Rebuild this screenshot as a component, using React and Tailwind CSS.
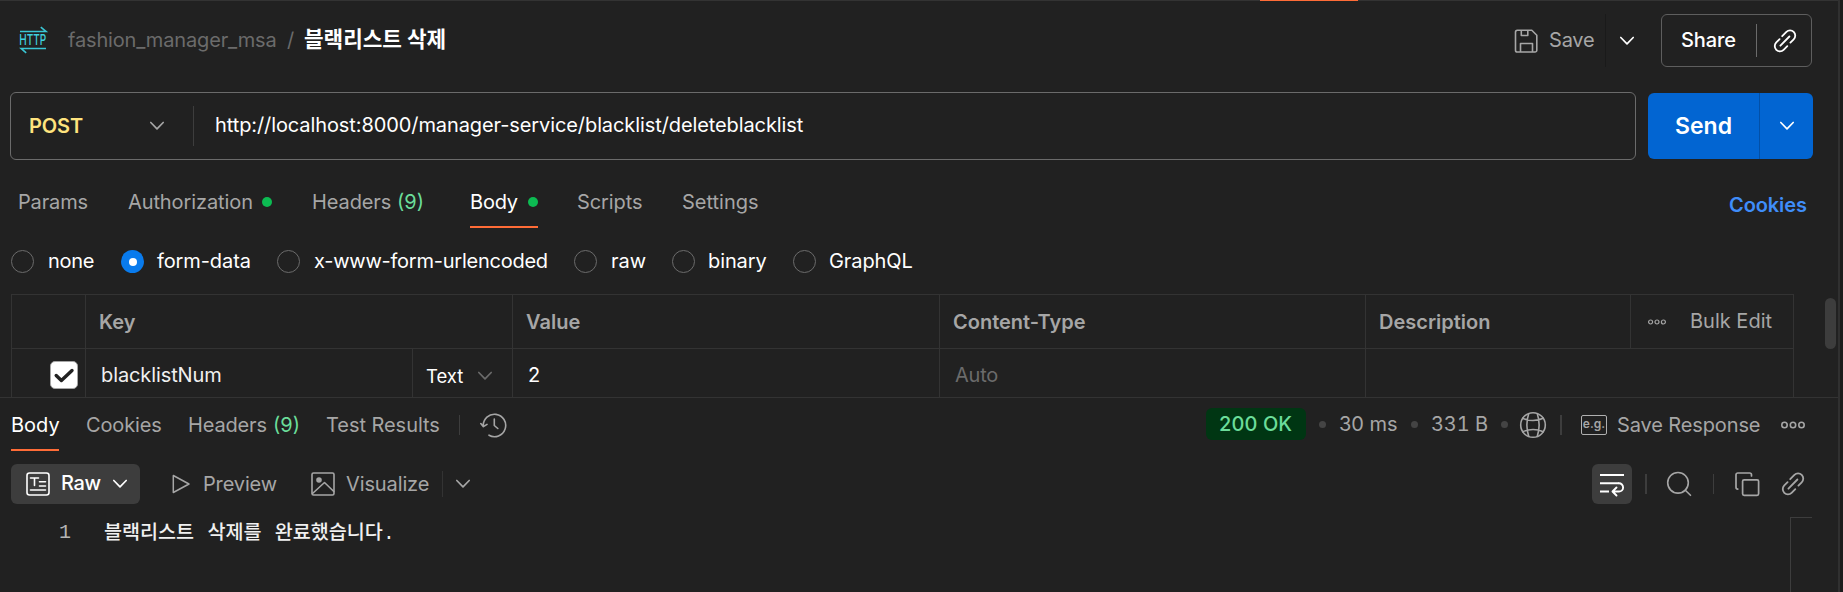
import React from "react";

function Icon({ w = 24, h = w, vb = `0 0 ${w} ${h}`, sw = 1.5, className = "", children }) {
  return (
    <svg
      width={w}
      height={h}
      viewBox={vb}
      fill="none"
      stroke="currentColor"
      strokeWidth={sw}
      strokeLinecap="round"
      strokeLinejoin="round"
      className={`block shrink-0 ${className}`}
    >
      {children}
    </svg>
  );
}

const Chevron = ({ className }) => (
  <Icon w={16} h={10} sw={1.7} className={className}>
    <path d="M1.8 1.5 8 7.8l6.2-6.3" />
  </Icon>
);

const LinkIcon = ({ className }) => (
  <Icon w={26} sw={1.8} className={className}>
    <path d="M10.200 8.200l4.200-4.300a5.100 5.100 0 0 1 7.300 0 5.200 5.200 0 0 1 0 7.400l-3.300 3.300M15.300 18.100l-3.700 3.700a5.100 5.100 0 0 1-7.300 0 5.200 5.200 0 0 1 0-7.400l3.300-3.300M8.400 17.700l9-9.200" />
  </Icon>
);

const More = ({ w, r, sw, className }) => (
  <Icon w={w} h={8} vb={`0 0 ${w} 8`} sw={sw} className={className}>
    <circle cx={r + sw / 2} cy="4" r={r} />
    <circle cx={w / 2} cy="4" r={r} />
    <circle cx={w - r - sw / 2} cy="4" r={r} />
  </Icon>
);

const HttpIcon = () => (
  <svg width="28" height="28" viewBox="0 0 28 28" className="block shrink-0 overflow-visible" fill="none" stroke="#3ac6d4" strokeWidth="1.6">
    <path d="M1 5.500h26L21.800 1.200M27 22.500H2.200L7.200 26.800" />
    <text x="0.300" y="19.300" textLength="27" lengthAdjust="spacingAndGlyphs" fill="#3fd0de" stroke="none" className="font-['Inter'] text-[15px] font-medium">
      HTTP
    </text>
  </svg>
);

const Dot = ({ className }) => <i className={`block size-[10px] shrink-0 rounded-full bg-[#0cbb52] ${className}`} />;

const Radio = ({ on }) =>
  on ? (
    <i className="flex size-[23px] shrink-0 items-center justify-center rounded-full bg-[#097bed]">
      <i className="block size-2 rounded-full bg-white" />
    </i>
  ) : (
    <i className="block size-[23px] shrink-0 rounded-full border border-[#6b6b6b]" />
  );

function Header() {
  return (
    <header className="flex h-[91px] shrink-0 pl-[19px] pt-[13px]">
      <div className="flex h-[52px] w-[1494px] items-center">
        <div className="w-[49px]"><HttpIcon /></div>
        <span className="w-[219px] tracking-[-0.16px] text-[#6b6b6b]">fashion_manager_msa</span>
        <span className="w-[17px] text-[#6b6b6b]">/</span>
        <h1 className="pb-[2px] font-['Inter','Noto_Sans_CJK_KR',sans-serif] text-[21.300px] font-bold leading-6 text-white">블랙리스트 삭제</h1>
      </div>
      <div className="flex h-[53px] w-[148px] items-center text-[#a6a6a6]">
        <Icon w={26} sw={1.6} className="mr-[10px]">
          <path d="M4.300 2.300h14.500l5 5v14.900a1.800 1.800 0 0 1-1.800 1.800H4.300a1.800 1.800 0 0 1-1.800-1.800V4.100a1.800 1.800 0 0 1 1.800-1.800ZM8.300 2.500v5h6.500v-5M7.500 24v-8.500h12V24" />
        </Icon>
        <span className="w-[56px] pb-[2px] tracking-[-0.2px]">Save</span>
        <i className="h-full w-px bg-[#1a1a1a]" />
        <Chevron className="ml-[13px] text-white" />
      </div>
      <div className="flex h-[53px] w-[151px] items-center rounded-md border border-[#5e5e5e] font-medium text-white">
        <span className="w-[75px] pb-[2px] pl-[19px] tracking-[-0.1px]">Share</span>
        <i className="ml-[19px] h-[33px] w-px bg-[#6b6b6b]" />
        <LinkIcon className="ml-[15px]" />
      </div>
    </header>
  );
}

function UrlBar() {
  return (
    <div className="flex h-[68px] shrink-0 items-center pl-[10px]">
      <div className="flex h-[68px] w-[1626px] items-center rounded-md border border-[#6b6b6b]">
        <span className="w-[138px] pl-[18px] font-semibold tracking-[-0.1px] text-[#ffe47e]">POST</span>
        <Chevron className="text-[#a6a6a6]" />
        <i className="ml-[28px] h-[40px] w-px bg-[#3d3d3d]" />
        <span className="ml-[21px] pb-[2px] tracking-[-0.095px] text-white">http://localhost:8000/manager-service/blacklist/deleteblacklist</span>
      </div>
      <button className="ml-[12px] flex h-[66px] w-[165px] items-center rounded-md bg-[#0265d2] text-left text-white">
        <span className="w-[111px] pl-[27px] text-[23px] font-semibold">Send</span>
        <i className="h-full w-px bg-[#0250a8]" />
        <Chevron className="ml-[19px]" />
      </button>
    </div>
  );
}

function RequestTabs() {
  return (
    <nav className="flex h-[69px] shrink-0 pl-[18px] text-[#a6a6a6]">
      <div className="flex h-[68px] items-end">
        <span className="h-[41px] w-[110px] tracking-[-0.15px]">Params</span>
        <span className="flex h-[41px] w-[184px]">
          <span className="w-[134px] tracking-[-0.1px]">Authorization</span>
          <Dot className="mt-[10px]" />
        </span>
        <span className="flex h-[41px] w-[158px]">
          <span className="w-[85px] tracking-[-0.1px]">Headers</span>
          <span className="text-[#6bdd9a]">(9)</span>
        </span>
        <span className="mr-[39px] flex h-[41px] w-[68px] border-b-2 border-[#ff6c37] text-white">
          <span className="w-[58px] tracking-[-0.2px]">Body</span>
          <Dot className="mt-[10px]" />
        </span>
        <span className="h-[41px] w-[105px] tracking-[-0.1px]">Scripts</span>
        <span className="h-[41px] w-[1047px]">Settings</span>
        <a className="h-[38px] font-semibold tracking-[-0.1px] text-[#3f8df9]">Cookies</a>
      </div>
    </nav>
  );
}

function RadioOption({ className, on, children }) {
  return (
    <label className={`flex h-[23px] items-center ${className}`}>
      <Radio on={on} />
      <span className="pb-[2px]">{children}</span>
    </label>
  );
}

function BodyTypes() {
  return (
    <div className="flex h-[65px] shrink-0 pl-[11px] pt-[21px] text-white">
      <RadioOption className="w-[110px] gap-[14px] tracking-[-0.3px]">none</RadioOption>
      <RadioOption on className="w-[156px] gap-[13px] tracking-[-0.1px]">form-data</RadioOption>
      <RadioOption className="w-[297px] gap-[14px] tracking-[-0.24px]">x-www-form-urlencoded</RadioOption>
      <RadioOption className="w-[98px] gap-[14px]">raw</RadioOption>
      <RadioOption className="w-[121px] gap-[13px] tracking-[-0.1px]">binary</RadioOption>
      <RadioOption className="gap-[13px] tracking-[-0.1px]">GraphQL</RadioOption>
    </div>
  );
}

function ParamsTable() {
  return (
    <div className="flex h-[104px] shrink-0 border-b border-[#333333] pl-[11px]">
      <div className="w-[1783px] border-x border-t border-[#333333]">
        <div className="flex h-[54px] items-center border-b border-[#333333] font-semibold text-[#a6a6a6]">
          <span className="h-full w-[74px] border-r border-[#333333]" />
          <span className="flex h-full w-[427px] items-center border-r border-[#333333] pl-[13px]">Key</span>
          <span className="flex h-full w-[427px] items-center border-r border-[#333333] pl-[13px]">Value</span>
          <span className="flex h-full w-[426px] items-center border-r border-[#333333] pl-[13px]">Content-Type</span>
          <span className="flex h-full w-[265px] items-center border-r border-[#333333] pl-[13px]">Description</span>
          <More w={18} r={2} sw={1.2} className="ml-[17px]" />
          <span className="ml-[24px] pb-[2px] font-normal">Bulk Edit</span>
        </div>
        <div className="flex h-[48px] text-[#f0f0f0]">
          <span className="h-full w-[74px] border-r border-[#333333] pl-[38px] pt-[12px]">
            <i className="flex size-[28px] items-center justify-center rounded-[5px] border border-[#a6a6a6] bg-white text-[#212121]">
              <Icon w={22} sw={3.4}>
                <path d="M3.200 11.500l5.200 5L19 6.500" />
              </Icon>
            </i>
          </span>
          <span className="flex h-full w-[327px] items-center border-r border-[#333333] pl-[15px] pb-px pt-[5px] tracking-[-0.1px]">blacklistNum</span>
          <span className="flex h-full w-[100px] items-center border-r border-[#333333] pl-[13px] pt-[5px] text-[18.500px]">
            <span className="w-[51px] text-white">Text</span>
            <Chevron className="text-[#6b6b6b]" />
          </span>
          <span className="flex h-full w-[427px] items-center border-r border-[#333333] pl-[15px] pt-[4px] text-white">2</span>
          <span className="flex h-full w-[426px] items-center border-r border-[#333333] pl-[15px] pt-[4px] tracking-[-0.2px] text-[#6b6b6b]">Auto</span>
        </div>
      </div>
      <i className="ml-[31px] mt-[4px] h-[51px] w-[11px] rounded-full bg-[#3d3d3d]" />
    </div>
  );
}

const Sep = ({ className }) => <i className={`block h-[20px] shrink-0 bg-[#3d3d3d] ${className}`} />;
const GreyDot = ({ className }) => <i className={`block size-[7px] shrink-0 rounded-full bg-[#444444] ${className}`} />;

function ResponseTabs() {
  return (
    <div className="flex h-[66px] shrink-0 pl-[11px] text-[#a6a6a6]">
      <span className="mt-[12px] h-[41px] w-[48px] border-b-2 border-[#ff6c37] text-white">Body</span>
      <div className="flex h-[54px] w-[1147px] items-center pl-[27px]">
        <span className="w-[102px] tracking-[-0.15px]">Cookies</span>
        <span className="w-[85px] tracking-[-0.15px]">Headers</span>
        <span className="w-[53px] text-[#6bdd9a]">(9)</span>
        <span className="w-[133px] tracking-[-0.05px]">Test Results</span>
        <Sep className="w-px" />
        <Icon w={27} h={26} sw={1.6} className="ml-[20px]">
          <path d="M3.300 14A11.200 11.200 0 1 1 9 23.200M.8 11.500l2.600 3.200 3.600-2.300M14.300 7v6.500l3.500 3" />
        </Icon>
      </div>
      <div className="flex h-[52px] items-center">
        <span className="flex h-[32px] w-[100px] items-center rounded-md bg-[#003613] pl-[13px] font-medium tracking-[0.1px] text-[#6bdd9a]">200 OK</span>
        <GreyDot className="ml-[13px]" />
        <span className="ml-[13px] w-[72px]">30 ms</span>
        <GreyDot className="mr-[13px]" />
        <span className="w-[70px] tracking-[-0.1px] tabular-nums">331 B</span>
        <GreyDot className="mr-[11px]" />
        <Icon w={28} sw={1.6} className="mt-[2px]">
          <circle cx="14" cy="14" r="12.300" />
          <path d="M9.700 2.800c-2.300 7-2.300 15.400 0 22.400M18.300 2.800c2.300 7 2.300 15.400 0 22.400M3.800 7.200c5.600 3 14.800 3 20.400 0M3.800 20.800c5.600-3 14.800-3 20.400 0" />
        </Icon>
        <Sep className="ml-[13px] mt-[2px] w-[2px]" />
        <span className="ml-[19px] mt-[2px] flex h-[20px] w-[26px] items-center justify-center rounded-[2px] border border-[#b0b0b0] pb-[3px] text-[12px] font-semibold leading-none">e.g.</span>
        <span className="ml-[10px] mt-[2px] w-[164px] tracking-[-0.12px]">Save Response</span>
        <More w={24} r={2.700} sw={1.600} className="mt-[2px]" />
      </div>
    </div>
  );
}

function ResponseToolbar() {
  return (
    <div className="flex h-[40px] shrink-0 items-center pl-[11px] text-[#a6a6a6]">
      <div className="flex h-[40px] w-[129px] items-center rounded-md bg-[#3d3d3d] text-white">
        <Icon w={24} sw={1.600} className="ml-[15px]">
          <rect x="1" y="1" width="22" height="22" rx="2.500" />
          <path d="M4.500 6h8M8.500 6v7.500M13.500 9.700h6M13.500 14h6M4.500 18h15" />
        </Icon>
        <span className="ml-[11px] w-[51px] pb-[2px] font-medium tracking-[-0.3px]">Raw</span>
        <Chevron />
      </div>
      <Icon w={20} h={22} className="ml-[31px]">
        <path d="M2.300 2.500v17L18 11Z" />
      </Icon>
      <span className="ml-[12px] w-[108px] tracking-[-0.15px]">Preview</span>
      <Icon w={24} sw={1.600}>
        <rect x="1" y="1" width="22" height="22" rx="1.500" />
        <circle cx="8" cy="8" r="2" fill="currentColor" />
        <path d="M1.500 21.500 13.500 10.500 22.800 19.500" />
      </Icon>
      <span className="ml-[11px] w-[96px] tracking-[-0.12px]">Visualize</span>
      <Sep className="h-[26px] w-px bg-[#333333]" />
      <Chevron className="ml-[12px]" />
      <span className="ml-[1121px] flex size-[40px] items-center justify-center rounded-md bg-[#3d3d3d] text-white">
        <Icon w={26} sw={1.900}>
          <path strokeLinecap="butt" d="M1 4h24M1 12.300h19M1 20.500h9" />
          <path d="M20 12.300a4 4 0 0 1 0 8.200h-6M17.500 16.500l-4 4 4 4" />
        </Icon>
      </span>
      <Sep className="ml-[13px] w-[2px]" />
      <Icon w={26} sw={1.600} className="ml-[19px]">
        <circle cx="12" cy="11.800" r="10.300" />
        <path d="M19.300 19.200l5.200 5.100" />
      </Icon>
      <Sep className="ml-[21px] w-px" />
      <Icon w={26} sw={1.700} className="ml-[20px]">
        <rect x="8.600" y="8.800" width="16" height="15.500" rx="1.500" />
        <path d="M17.500 5V3.800a1.800 1.800 0 0 0-1.800-1.800H3.800A1.800 1.800 0 0 0 2 3.800v12.500a1.800 1.800 0 0 0 1.800 1.800" />
      </Icon>
      <LinkIcon className="ml-[20px]" />
    </div>
  );
}

function ResponseBody() {
  return (
    <div className="flex min-h-0 flex-1 pt-[13px]">
      <span className="w-[104px] pl-[59px] pt-px font-['Liberation_Mono',monospace] leading-[30px] text-[#b5b5b5]">1</span>
      <code className="w-[1686px] whitespace-pre pt-[3px] font-['Liberation_Mono','Noto_Sans_CJK_KR',monospace] text-[19.600px] font-medium leading-[28px] text-[#f0f0f0] [word-spacing:1.5px]">블랙리스트 삭제를 완료했습니다.</code>
      <i className="block h-full w-[22px] border-l border-t border-[#3d3d3d]" />
    </div>
  );
}

export default function App() {
  return (
    <div className="flex h-[592px] w-[1843px] overflow-hidden whitespace-nowrap bg-[#1c1c1c] font-['Inter','Noto_Sans_CJK_KR',sans-serif] text-[20px] leading-[30px] not-italic">
      <main className="flex w-[1840px] flex-col border-r-2 border-[#303030] bg-[#212121]">
        <div className="h-px shrink-0 bg-[#333333]">
          <i className="ml-[1260px] block h-px w-[98px] bg-[#ff6c37]" />
        </div>
        <Header />
        <UrlBar />
        <RequestTabs />
        <BodyTypes />
        <ParamsTable />
        <ResponseTabs />
        <ResponseToolbar />
        <ResponseBody />
      </main>
    </div>
  );
}
